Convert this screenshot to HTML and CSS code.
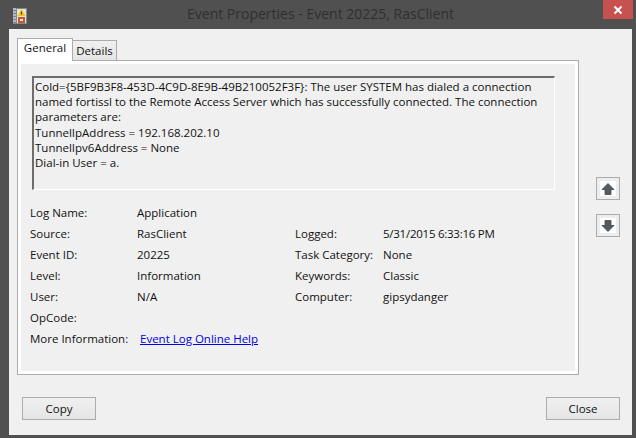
FILE: index.html
```html
<!DOCTYPE html>
<html lang="en">
<head>
<meta charset="utf-8">
<title>Event Properties</title>
<link rel="stylesheet" href="styles.css">
</head>
<body>
<div class="window">
  <header class="titlebar">
    <svg class="app-icon" width="16" height="18" viewBox="0 0 16 18">
      <rect x="1" y="1" width="14" height="16" fill="#7d8a94"/>
      <path d="M1 2h3M1 5h3M1 8h3M1 11h3M1 14h3" stroke="#e4e8ea" stroke-width="1"/>
      <rect x="5" y="2" width="9" height="14" fill="#e9e4c8"/>
      <path d="M9.500 2L13.500 9H5.500z" fill="#f2c21a"/>
      <rect x="9" y="4.500" width="1" height="3" fill="#33302a"/>
      <rect x="6" y="10" width="7" height="6" fill="#c9572f"/>
      <rect x="8" y="12" width="3" height="2" fill="#f2e6d8"/>
    </svg>
    <div class="title">Event Properties - Event 20225, RasClient</div>
    <button class="close-x" type="button" aria-label="Close">
      <svg width="10" height="10" viewBox="0 0 10 10"><path d="M1.500 1.500l7 7M8.500 1.500l-7 7" stroke="#fff" stroke-width="2"/></svg>
    </button>
  </header>
  <div class="client">
    <div class="main-row">
      <div class="tabs-col">
        <div class="tabstrip">
          <div class="tab tab-active">General</div>
          <div class="tab">Details</div>
        </div>
        <div class="panel">
          <div class="message">
            Cold={5BF9B3F8-453D-4C9D-8E9B-49B210052F3F}: The user SYSTEM has dialed a connection named fortissl to the Remote Access Server which has successfully connected. The connection parameters are:<br>
            TunnelIpAddress = 192.168.202.10<br>
            TunnelIpv6Address = None<br>
            Dial-in User = a.
          </div>
          <div class="details">
            <div class="lbl">Log Name:</div><div class="val wide">Application</div>
            <div class="lbl">Source:</div><div class="val">RasClient</div><div class="lbl2">Logged:</div><div class="val2 date">5/31/2015 6:33:16 PM</div>
            <div class="lbl">Event ID:</div><div class="val">20225</div><div class="lbl2">Task Category:</div><div class="val2">None</div>
            <div class="lbl">Level:</div><div class="val">Information</div><div class="lbl2">Keywords:</div><div class="val2">Classic</div>
            <div class="lbl">User:</div><div class="val">N/A</div><div class="lbl2">Computer:</div><div class="val2">gipsydanger</div>
            <div class="lbl">OpCode:</div><div class="val wide"></div>
          </div>
          <div class="more"><span class="more-label">More Information:</span><a class="help" href="#">Event Log Online Help</a></div>
        </div>
      </div>
      <div class="arrows">
        <button class="arrow" type="button" aria-label="Previous">
          <svg width="14" height="14" viewBox="0 0 14 14"><path d="M7 1.500L13 7.500H10V12.500H4V7.500H1z" fill="#555b60" stroke="#44484c" stroke-width=".8"/></svg>
        </button>
        <button class="arrow" type="button" aria-label="Next">
          <svg width="14" height="14" viewBox="0 0 14 14"><path d="M7 12.500L13 6.500H10V1.500H4V6.500H1z" fill="#555b60" stroke="#44484c" stroke-width=".8"/></svg>
        </button>
      </div>
    </div>
    <footer class="actions">
      <button class="btn" type="button">Copy</button>
      <button class="btn" type="button">Close</button>
    </footer>
  </div>
</div>
</body>
</html>
```
FILE: styles.css
```css
* { box-sizing: border-box; }
html, body { margin: 0; padding: 0; }
body {
  width: 636px;
  height: 438px;
  overflow: hidden;
  background: #4e4e4e;
  font-family: "Open Sans", "Noto Sans", sans-serif;
  font-size: 11.5px;
  color: #111;
}
.window {
  width: 636px;
  height: 438px;
  display: flex;
  flex-direction: column;
  padding: 0 3px 3px 1px;
  background: #505050;
}
.titlebar {
  height: 29px;
  flex: none;
  display: flex;
  align-items: flex-start;
  padding-left: 11px;
}
.app-icon { margin-top: 7px; flex: none; }
.title {
  flex: 1;
  text-align: center;
  font-size: 14px;
  line-height: 27px;
  color: #2f2f2f;
  padding-left: 10px;
}
.close-x {
  width: 30px;
  height: 19px;
  padding: 0;
  margin: 0;
  border: 0;
  background: #c75050;
  display: flex;
  align-items: center;
  justify-content: center;
}
.client {
  flex: 1;
  margin: 0 1px 0 8px;
  background: #f0f0f0;
  display: flex;
  flex-direction: column;
  padding: 9px 0 0 8px;
}
.main-row { display: flex; flex: none; }
.tabs-col { width: 562px; flex: none; }
.tabstrip { display: flex; height: 22px; align-items: flex-end; }
.tab {
  height: 20px;
  width: 45px;
  border: 1px solid #acacac;
  border-bottom: 0;
  background: linear-gradient(#f0f0f0, #e5e5e5);
  text-align: center;
  line-height: 19px;
  margin-left: -1px;
}
.tab-active {
  height: 23px;
  width: 56px;
  margin-left: 0;
  background: #fff;
  line-height: 18px;
  margin-bottom: -1px;
  position: relative;
  z-index: 1;
  border-bottom: 0;
}
.panel {
  height: 315px;
  border: 1px solid #acacac;
  box-shadow: inset 0 0 0 3px #fff;
  background: #f0f0f0;
  padding: 15px 23px 0 12px;
}
.message {
  height: 114px;
  margin-left: 2px;
  border-top: 2px solid #6d6d6d;
  border-left: 2px solid #6d6d6d;
  border-right: 1px solid #fff;
  border-bottom: 1px solid #fff;
  padding: 1px 2px 0 1px;
  line-height: 15.200px;
}
.details {
  display: grid;
  grid-template-columns: 107px 158px 88px 1fr;
  grid-auto-rows: 21px;
  margin-top: 12px;
  line-height: 21px;
}
.wide { grid-column: 2 / 5; }
.date { letter-spacing: -0.25px; }
.more { display: flex; line-height: 21px; }
.more-label { width: 110px; flex: none; }
.help { color: #0000e6; text-decoration: underline; }
.arrows {
  display: flex;
  flex-direction: column;
  gap: 14px;
  padding: 139px 0 0 17px;
}
.arrow {
  width: 24px;
  height: 23px;
  padding: 0;
  border: 1px solid #acacac;
  background: #fff;
  box-shadow: inset 0 0 0 3px #ededed;
  display: flex;
  align-items: center;
  justify-content: center;
}
.actions {
  display: flex;
  justify-content: space-between;
  padding: 22px 0 0 5px;
  width: 603px;
}
.btn {
  width: 74px;
  height: 23px;
  padding: 0;
  border: 1px solid #acacac;
  background: linear-gradient(#f0f0f0, #e5e5e5);
  font: inherit;
  color: #111;
}
```
